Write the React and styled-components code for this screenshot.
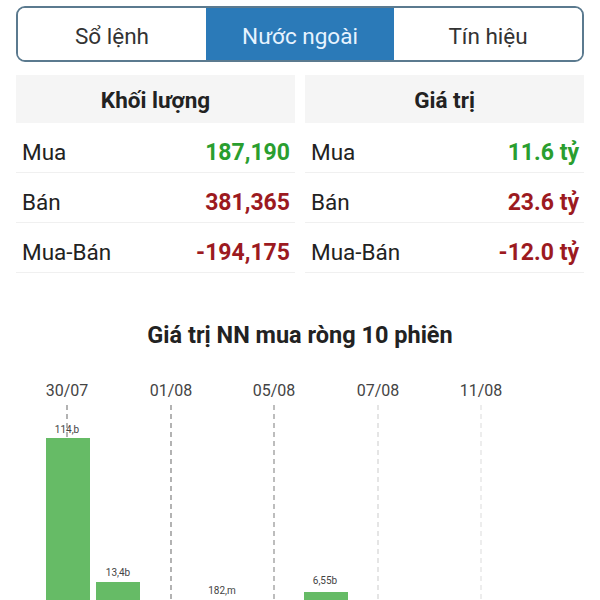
import React from "react";
import styled, { createGlobalStyle } from "styled-components";

const Global = createGlobalStyle`
  html, body { margin: 0; padding: 0; background: #fff; }
  body { font-family: Roboto, "Noto Sans", "Liberation Sans", sans-serif; color: #222; }
`;

const Page = styled.div`
  width: 600px;
  height: 600px;
  overflow: hidden;
  display: flex;
  flex-direction: column;
`;

const Inner = styled.div`
  padding: 6px 16px 0 16px;
  display: flex;
  flex-direction: column;
`;

const Tabs = styled.div`
  display: flex;
  height: 56px;
  box-sizing: border-box;
  border: 2px solid #5b7a8f;
  border-radius: 9px;
  overflow: hidden;
`;

const Tab = styled.div`
  flex: 1;
  display: flex;
  align-items: center;
  justify-content: center;
  padding-top: 3px;
  font-size: 22.5px;
  color: ${(p) => (p.$active ? "#e6f3ff" : "#333")};
  background: ${(p) => (p.$active ? "#2b7ab8" : "#fff")};
`;

const Stats = styled.div`
  display: grid;
  grid-template-columns: 1fr 1fr;
  column-gap: 10px;
  margin-top: 13px;
`;

const Column = styled.div`
  display: flex;
  flex-direction: column;
`;

const HeaderCell = styled.div`
  height: 48px;
  background: #f5f5f5;
  display: flex;
  align-items: center;
  justify-content: center;
  padding-top: 2px;
  box-sizing: border-box;
  font-size: 22.5px;
  font-weight: 700;
  color: #222;
`;

const Row = styled.div`
  height: 50px;
  box-sizing: border-box;
  border-bottom: 1.5px solid #f0f0f0;
  display: flex;
  align-items: center;
  justify-content: space-between;
  padding: 9px 5px 0 6px;
`;

const Label = styled.span`
  font-size: 22.5px;
  color: #222;
`;

const Value = styled.span`
  font-size: 23px;
  font-weight: 700;
  color: ${(p) => (p.$tone === "up" ? "#2a9e2f" : "#9c1a1f")};
`;

const ChartTitle = styled.div`
  margin-top: 49px;
  text-align: center;
  font-size: 23.5px;
  font-weight: 700;
  line-height: 26px;
  color: #222;
`;

const ChartSvg = styled.svg`
  display: block;
  margin-top: 21px;
  flex-shrink: 0;
`;

const stats = [
  {
    title: "Khối lượng",
    rows: [
      ["Mua", "187,190", "up"],
      ["Bán", "381,365", "down"],
      ["Mua-Bán", "-194,175", "down"],
    ],
  },
  {
    title: "Giá trị",
    rows: [
      ["Mua", "11.6 tỷ", "up"],
      ["Bán", "23.6 tỷ", "down"],
      ["Mua-Bán", "-12.0 tỷ", "down"],
    ],
  },
];

const dates = [
  { x: 67, label: "30/07", color: "#8a8a8a" },
  { x: 171, label: "01/08", color: "#8a8a8a" },
  { x: 274, label: "05/08", color: "#9a9a9a" },
  { x: 378, label: "07/08", color: "#d8d8d8" },
  { x: 481, label: "11/08", color: "#e4e4e4" },
];

const bars = [
  { x: 46, top: 69, label: "114,b", lx: 67, ly: 64 },
  { x: 96, top: 213, label: "13,4b", lx: 118, ly: 207 },
  { x: null, top: null, label: "182,m", lx: 222, ly: 225 },
  { x: 304, top: 223, label: "6,55b", lx: 325, ly: 215 },
];

function Chart() {
  return (
    <ChartSvg width="600" height="232" viewBox="0 0 600 232">
      {dates.map((d) => (
        <text
          key={d.label}
          x={d.x}
          y={27}
          textAnchor="middle"
          fontSize="16"
          fill="#444"
          fontFamily="Roboto, sans-serif"
        >
          {d.label}
        </text>
      ))}
      {dates.map((d) => (
        <line
          key={"l" + d.label}
          x1={d.x}
          x2={d.x}
          y1={36}
          y2={232}
          stroke={d.color}
          strokeWidth="1.3"
          strokeDasharray="5 4"
        />
      ))}
      {bars.map((b, i) =>
        b.x !== null ? (
          <rect key={"b" + i} x={b.x} y={b.top} width={44} height={232 - b.top} fill="#66bb66" />
        ) : null
      )}
      {bars.map((b, i) => (
        <text
          key={"t" + i}
          x={b.lx}
          y={b.ly}
          textAnchor="middle"
          fontSize="10"
          fill="#444"
          fontFamily="Roboto, sans-serif"
        >
          {b.label}
        </text>
      ))}
    </ChartSvg>
  );
}

export default function App() {
  return (
    <>
      <Global />
      <Page>
        <Inner>
          <Tabs>
            <Tab>Sổ lệnh</Tab>
            <Tab $active>Nước ngoài</Tab>
            <Tab>Tín hiệu</Tab>
          </Tabs>
          <Stats>
            {stats.map((col) => (
              <Column key={col.title}>
                <HeaderCell>{col.title}</HeaderCell>
                {col.rows.map(([l, v, t]) => (
                  <Row key={l}>
                    <Label>{l}</Label>
                    <Value $tone={t}>{v}</Value>
                  </Row>
                ))}
              </Column>
            ))}
          </Stats>
          <ChartTitle>Giá trị NN mua ròng 10 phiên</ChartTitle>
        </Inner>
        <Chart />
      </Page>
    </>
  );
}
